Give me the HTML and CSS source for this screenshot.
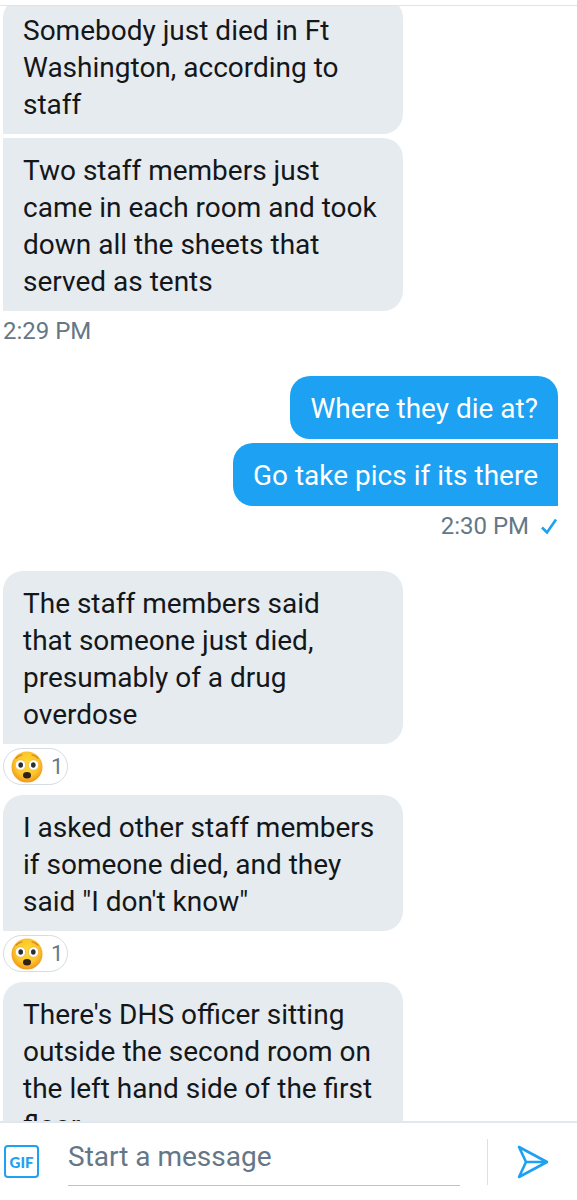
FILE: index.html
```html
<!DOCTYPE html>
<html lang="en">
<head>
<meta charset="utf-8">
<meta name="viewport" content="width=device-width, initial-scale=1">
<title>Messages</title>
<link rel="stylesheet" href="styles.css">
</head>
<body>
<svg class="defs" aria-hidden="true">
  <defs>
    <radialGradient id="skin" cx="50%" cy="42%" r="56%">
      <stop offset="0" stop-color="#ffdc35"/>
      <stop offset="0.65" stop-color="#fdc82b"/>
      <stop offset="1" stop-color="#f19a1e"/>
    </radialGradient>
    <symbol id="flushed" viewBox="0 0 32 32">
      <circle cx="16" cy="16" r="15.5" fill="url(#skin)"/>
      <path d="M5 7.200Q7.500 4.500 11 3.800M21 3.800Q24.500 4.500 27 7.200" fill="none" stroke="#d98a1c" stroke-width="1.300" stroke-linecap="round"/>
      <circle cx="9.500" cy="14" r="5.200" fill="#fff" stroke="#e8a224" stroke-width="0.600"/>
      <circle cx="22.500" cy="14" r="5.200" fill="#fff" stroke="#e8a224" stroke-width="0.600"/>
      <ellipse cx="9.700" cy="14" rx="2.300" ry="2.700" fill="#2b2f33"/>
      <ellipse cx="22.300" cy="14" rx="2.300" ry="2.700" fill="#2b2f33"/>
      <ellipse cx="16" cy="24.200" rx="4" ry="3.200" fill="#30201c"/>
    </symbol>
  </defs>
</svg>
<div class="app">
  <header class="topbar"></header>
  <main class="thread">
    <div class="messages">
      <section class="group">
        <p class="bubble">Somebody just died in Ft Washington, according to staff</p>
        <p class="bubble">Two staff members just came in each room and took down all the sheets that served as tents</p>
        <time class="stamp">2:29 PM</time>
      </section>
      <section class="group sent">
        <p class="bubble">Where they die at?</p>
        <p class="bubble">Go take pics if its there</p>
        <div class="stamp"><time>2:30 PM</time>
          <svg class="check" viewBox="0 0 18 18" aria-label="Seen"><path d="M2 9.500L7 14.500L16 1.500" fill="none" stroke="#1da1f2" stroke-width="2.600"/></svg>
        </div>
      </section>
      <section class="group">
        <p class="bubble">The staff members said<br>that someone just died, presumably of a drug overdose</p>
        <button class="reaction" type="button"><svg class="emoji" aria-label="Flushed face"><use href="#flushed"/></svg><span>1</span></button>
        <p class="bubble">I asked other staff members if someone died, and they said "I don't know"</p>
        <button class="reaction" type="button"><svg class="emoji" aria-label="Flushed face"><use href="#flushed"/></svg><span>1</span></button>
        <p class="bubble">There's DHS officer sitting outside the second room on the left hand side of the first floor</p>
      </section>
    </div>
  </main>
  <form class="composer">
    <button class="gif" type="button">GIF</button>
    <input class="field" type="text" placeholder="Start a message" aria-label="Start a message">
    <div class="send-area">
      <button class="send" type="button" aria-label="Send">
        <svg viewBox="0 0 32 34"><path d="M2 2L30 17L2 32L9 17ZM9 17H30" fill="none" stroke="#1da1f2" stroke-width="2.600" stroke-linejoin="round"/></svg>
      </button>
    </div>
  </form>
</div>
</body>
</html>
```
FILE: styles.css
```css
* {
  box-sizing: border-box;
}

body {
  margin: 0;
  background: #fff;
  color: #14171a;
  font-family: Roboto, "Liberation Sans", sans-serif;
  font-size: 28px;
  line-height: 37px;
}

button,
input {
  font-family: inherit;
  padding: 0;
  border: 0;
  background: none;
}

.defs {
  position: absolute;
  width: 0;
  height: 0;
}

.app {
  display: flex;
  flex-direction: column;
  height: 100vh;
}

.topbar {
  flex: none;
  height: 6px;
  border-bottom: 1px solid #dfe4e8;
}

.thread {
  flex: 1;
  min-height: 0;
  overflow: hidden;
}

/* The thread is scrolled slightly past the top of its first message. */
.messages {
  display: flex;
  flex-direction: column;
  gap: 28px;
  margin-top: -8px;
  padding: 0 19px 0 3px;
}

.group {
  display: flex;
  flex-direction: column;
  align-items: flex-start;
  gap: 4px;
}

.bubble {
  width: 400px;
  max-width: 100%;
  margin: 0;
  padding: 14px 20px 11px;
  border-radius: 20px 20px 20px 0;
  background: #e6ebef;
}

.group .bubble:not(:first-child) {
  border-top-left-radius: 0;
}

.group .bubble:not(:last-child) {
  border-bottom-left-radius: 0;
}

.reaction + .bubble.bubble {
  margin-top: 6px;
  border-top-left-radius: 20px;
}

.sent {
  align-items: flex-end;
}

.sent .bubble.bubble {
  width: auto;
  padding-bottom: 12px;
  border-radius: 20px 0 0 20px;
  background: #1da1f2;
  color: #fff;
}

.sent .bubble.bubble:first-child {
  border-top-right-radius: 20px;
}

.stamp {
  display: flex;
  align-items: center;
  gap: 11px;
  height: 33px;
  color: #657786;
  font-size: 24px;
}

.check {
  width: 18px;
  height: 18px;
}

.reaction {
  display: flex;
  align-items: center;
  gap: 8px;
  width: 65px;
  height: 37px;
  padding: 0 0 0 7px;
  border: 1px solid #d5dce2;
  border-radius: 19px;
  color: #657786;
  font-size: 22px;
}

.emoji {
  width: 32px;
  height: 32px;
}

.composer {
  display: flex;
  flex: none;
  align-items: center;
  height: 79px;
  padding-left: 4px;
  border-top: 2px solid #e1e8ed;
}

.gif {
  width: 35px;
  height: 33px;
  border: 2px solid #1da1f2;
  border-radius: 4px;
  color: #1da1f2;
  font-family: Lato, sans-serif;
  font-size: 15px;
  font-weight: 900;
}

.field {
  flex: 1;
  min-width: 0;
  height: 50px;
  margin: 0 27px 2px 29px;
  padding-bottom: 8px;
  border-bottom: 1px solid #b5c5d0;
  border-radius: 0;
  font-size: 28px;
}

.field::placeholder {
  color: #657786;
  opacity: 1;
}

.send-area {
  display: flex;
  align-items: center;
  justify-content: center;
  width: 90px;
  height: 46px;
  border-left: 1px solid #dbe2e7;
}

.send {
  width: 32px;
  height: 34px;
}

.send svg {
  display: block;
}
```
